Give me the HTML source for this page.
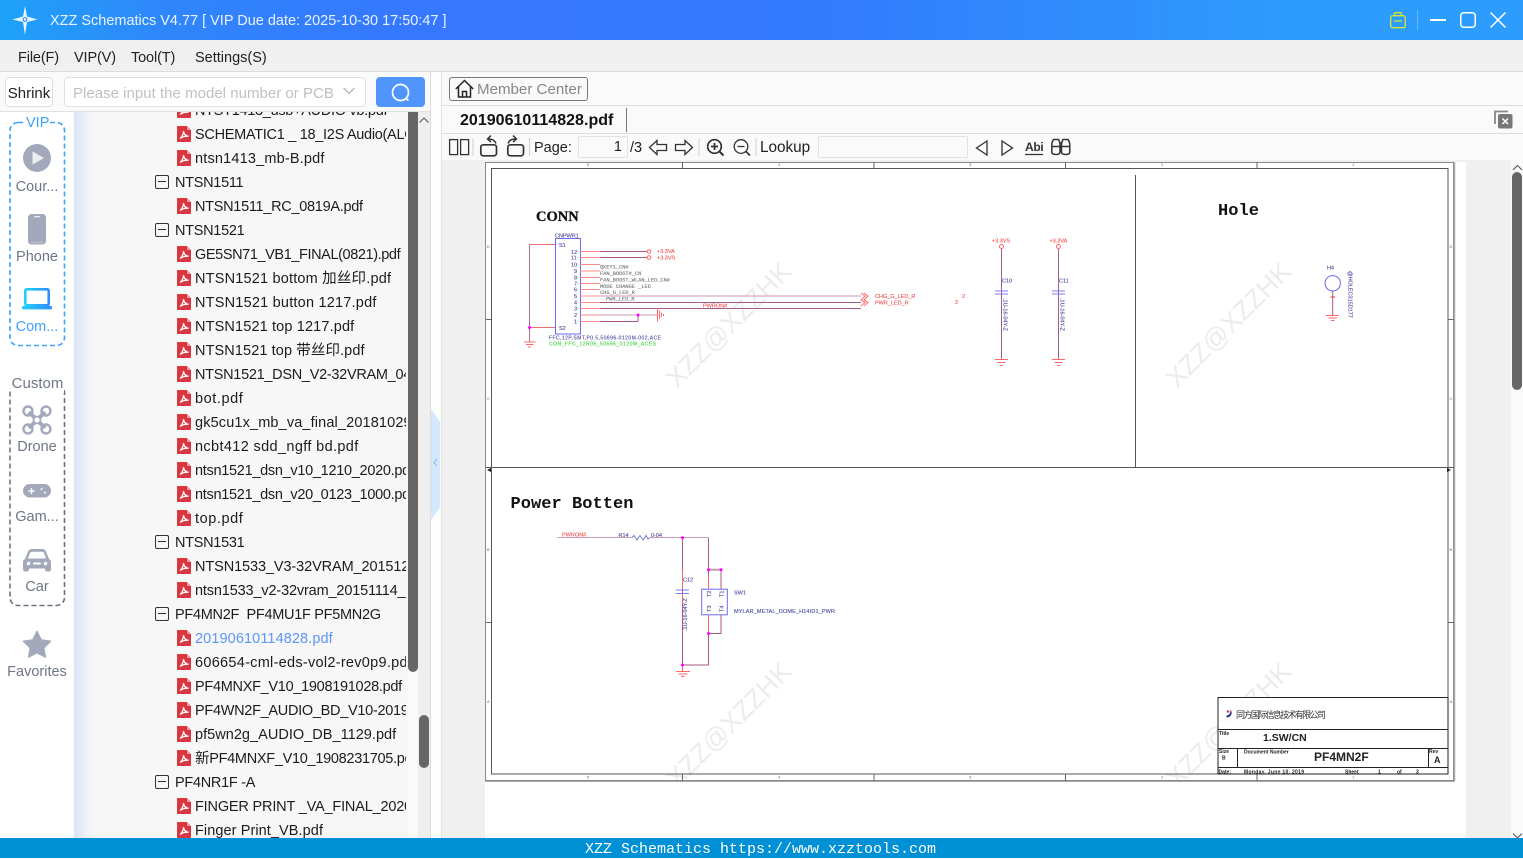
<!DOCTYPE html>
<html><head><meta charset="utf-8"><title>XZZ Schematics</title>
<style>
html,body{margin:0;padding:0}
body{width:1523px;height:858px;position:relative;overflow:hidden;background:#fafafa;font-family:"Liberation Sans","Noto Sans CJK SC",sans-serif;font-size:15px;color:#222}
.a{position:absolute;white-space:nowrap}
svg{position:absolute;overflow:visible}
#tree{position:absolute;left:74px;top:112px;width:332px;height:726px;overflow:hidden}
.r{position:absolute;left:121px;height:24px;line-height:26px;white-space:pre;color:#1c1c1c;font-size:14.5px;letter-spacing:-.29px}
.d{left:101px}
.ic{position:absolute;left:103px;width:14px;height:16px}
.bx{position:absolute;left:81px;width:12px;height:12px;border:1px solid #333;border-radius:2px}
.bx:after{content:"";position:absolute;left:2px;right:2px;top:5px;height:1px;background:#333}
.lb{position:absolute;width:74px;left:0;text-align:center;color:#6f7686;font-size:14.5px;line-height:20px}
.t{font-size:14.5px;line-height:22px;color:#222;letter-spacing:-.13px}
text{font-family:"Liberation Sans",sans-serif}
.sc text{stroke-width:.12}
</style></head><body>
<svg width="0" height="0" style="position:absolute"><defs>
<symbol id="pdf" viewBox="0 0 14 16"><path d="M1 0H10L14 4V15a1 1 0 0 1-1 1H1a1 1 0 0 1-1-1V1a1 1 0 0 1 1-1z" fill="#d9363e"/><path d="M10 0V4H14z" fill="#ee9a9d"/><path d="M3 12.5C5 11 6.800 7.500 6.500 5C6.800 8 8.500 10 11.500 10.300C8.500 10 5.500 10.800 3 12.500z" fill="none" stroke="#fff" stroke-width="1.300"/></symbol>
</defs></svg>

<!-- title bar -->
<div class="a" style="left:0;top:0;width:1523px;height:40px;background:linear-gradient(90deg,#1ea2f8 0,#2f86fb 170px,#3677ff 420px,#3379fd 800px,#2d9cfd 1300px,#2c9dfd 1523px)"></div>
<svg style="left:12px;top:6px" width="28" height="30" viewBox="0 0 28 30"><path d="M13 0L15 10.500L25.500 13.500L15 16L13 29L11 16L0.500 13.500L11 10.500z" fill="#e8f4ff"/><circle cx="13" cy="13.500" r="2.400" fill="#2b8ffb"/><circle cx="13" cy="13.500" r="1.200" fill="#fff"/></svg>
<div class="a" style="left:50px;top:11px;line-height:21px;color:#e9f3ff;font-size:14.5px;letter-spacing:-.01px">XZZ Schematics V4.77 [ VIP Due date: 2025-10-30 17:50:47 ]</div>
<svg style="left:1390px;top:12px" width="16" height="17" viewBox="0 0 16 17" fill="none" stroke="#d6e23a" stroke-width="1.300"><rect x=".7" y="3.700" width="14.600" height="12" rx="2"/><path d="M4.500 3.500V2a1.300 1.300 0 0 1 1.300-1.300h4.400A1.300 1.300 0 0 1 11.500 2V3.500M4 9h8"/></svg>
<div class="a" style="left:1417px;top:10px;width:1px;height:20px;background:#6db8f8"></div>
<div class="a" style="left:1430px;top:19px;width:16px;height:2px;background:#fff"></div>
<svg style="left:1460px;top:12px" width="16" height="16"><rect x=".75" y=".75" width="14.500" height="14.500" rx="3" fill="none" stroke="#fff" stroke-width="1.500"/></svg>
<svg style="left:1490px;top:12px" width="16" height="16"><path d="M.5 .5L15.500 15.500M15.500 .5L.5 15.500" stroke="#fff" stroke-width="1.500"/></svg>

<!-- menu -->
<div class="a" style="left:0;top:40px;width:1523px;height:31px;background:#f0f0f0;border-bottom:1px solid #dcdcdc"></div>
<div class="a t" style="left:18px;top:47px">File(F)</div>
<div class="a t" style="left:74px;top:47px">VIP(V)</div>
<div class="a t" style="left:131px;top:47px">Tool(T)</div>
<div class="a t" style="left:195px;top:47px;letter-spacing:0">Settings(S)</div>

<!-- left top toolbar -->
<div class="a" style="left:0;top:72px;width:430px;height:39px;background:#fafafa;border-bottom:1px solid #e0e0e0"></div>
<div class="a" style="left:5px;top:77px;width:46px;height:28px;border:1px solid #ddd;border-radius:4px;background:#fff;line-height:32px;text-align:center;color:#222;font-size:15px">Shrink</div>
<div class="a" style="left:64px;top:77px;width:300px;height:28px;border:1px solid #e0e0e0;border-radius:4px;background:#fff"></div>
<div class="a" style="left:73px;top:84px;line-height:20px;color:#c0c0c0;font-size:15px;letter-spacing:.02px">Please input the model number or PCB</div>
<svg style="left:343px;top:87px" width="12" height="8"><path d="M.5 .8L6 6.500L11.500 .8" fill="none" stroke="#b5b5b5" stroke-width="1.300"/></svg>
<div class="a" style="left:376px;top:77px;width:49px;height:30px;background:#4f95fb;border-radius:4px"></div>
<svg style="left:391px;top:83px" width="20" height="20" fill="none" stroke="#fff" stroke-width="1.700"><circle cx="9.500" cy="9.500" r="8"/><path d="M15 15.500L17.500 17.500"/></svg>

<!-- left rail -->
<div class="a" style="left:0;top:112px;width:74px;height:726px;background:#fff"></div>
<svg style="left:0;top:112px" width="74" height="520" fill="none" stroke-width="1.600" stroke-dasharray="5 3">
<rect x="10" y="10.500" width="54.500" height="223" rx="8" stroke="#3fa2fb"/>
<rect x="10" y="273" width="54.500" height="220.500" rx="8" stroke="#6b7282"/>
</svg>
<div class="a" style="left:26px;top:114px;width:22px;height:18px;background:#fff;line-height:18px;text-align:center;color:#3fa2fb;font-size:14.500px">VIP</div>
<div class="a" style="left:11px;top:375px;width:53px;height:18px;background:#fff;line-height:18px;text-align:center;color:#6f7686;font-size:15px">Custom</div>
<svg style="left:23px;top:144px" width="28" height="28"><circle cx="14" cy="14" r="14" fill="#a3a9bb"/><path d="M9.500 7.500L21 14L9.500 20.500z" fill="#eceef2"/></svg>
<div class="lb" style="top:177px">Cour...</div>
<svg style="left:28px;top:214px" width="18" height="31"><rect width="18" height="30.500" rx="3.500" fill="#a3a9bb"/><rect x="6" y="2" width="6" height="1.200" rx=".6" fill="#eef0f3"/><rect x="3" y="28" width="12" height=".8" fill="#c5c9d3"/></svg>
<div class="lb" style="top:247px">Phone</div>
<svg style="left:22px;top:288px" width="30" height="22"><defs><linearGradient id="g1" x1="0" x2="1" y1="0" y2="0"><stop offset="0" stop-color="#22d0f5"/><stop offset="1" stop-color="#2e8ffb"/></linearGradient></defs><rect x="3.300" y="1.300" width="23.400" height="16" rx="1.500" fill="none" stroke="url(#g1)" stroke-width="2.600"/><rect x="0" y="18" width="30" height="3.400" rx="1.200" fill="url(#g1)"/></svg>
<div class="lb" style="top:317px;color:#3fa2fb">Com...</div>
<svg style="left:22px;top:405px" width="30" height="30" fill="none" stroke="#a3a9bb"><path d="M7 7L23 23M23 7L7 23" stroke-width="4"/><circle cx="6" cy="6" r="4.500" stroke-width="2.400"/><circle cx="24" cy="6" r="4.500" stroke-width="2.400"/><circle cx="6" cy="24" r="4.500" stroke-width="2.400"/><circle cx="24" cy="24" r="4.500" stroke-width="2.400"/><circle cx="15" cy="15" r="3.500" fill="#fff" stroke-width="1.800"/></svg>
<div class="lb" style="top:437px">Drone</div>
<svg style="left:23px;top:484px" width="28" height="14"><rect width="28" height="13.500" rx="6.700" fill="#a3a9bb"/><path d="M5.500 7h6M8.500 4v6" stroke="#fff" stroke-width="1.400"/><circle cx="18.500" cy="5" r="1" fill="#fff"/><circle cx="22" cy="8.500" r="1" fill="#fff"/></svg>
<div class="lb" style="top:507px">Gam...</div>
<svg style="left:23px;top:548px" width="28" height="24"><path d="M2 11L5 3.500Q6 1 9 1H19Q22 1 23 3.500L26 11Q28 12 28 14V21Q28 23.500 26 23.500H24Q22 23.500 22 21V20.500H6V21Q6 23.500 4 23.500H2Q0 23.500 0 21V14Q0 12 2 11z" fill="#a3a9bb"/><path d="M5 10.500L7 5Q7.500 3.800 9 3.800H19Q20.500 3.800 21 5L23 10.500z" fill="#fff"/><circle cx="5.500" cy="15.500" r="1.800" fill="#fff"/><circle cx="22.500" cy="15.500" r="1.800" fill="#fff"/><rect x="10" y="14.500" width="8" height="2" rx="1" fill="#fff"/></svg>
<div class="lb" style="top:577px">Car</div>
<svg style="left:22px;top:630px" width="30" height="29"><path d="M15 1.500L19.200 10L28.500 11.300L21.700 17.800L23.300 27L15 22.600L6.700 27L8.300 17.800L1.500 11.300L10.800 10z" fill="#a3a9bb" stroke="#a3a9bb" stroke-width="1.500" stroke-linejoin="round"/></svg>
<div class="lb" style="top:662px">Favorites</div>

<!-- tree background -->
<div class="a" style="left:74px;top:112px;width:334px;height:726px;background:linear-gradient(90deg,#d9e4f5 0,#f0f3f8 14px,#f7f7f7 24px,#f7f7f7 100%)"></div>
<div id="tree">
<svg class="ic" style="top:-10px"><use href="#pdf" width="14" height="16"/></svg><div class="r" style="top:-14px">NTST1413_usb+AUDIO vb.pdf</div>
<svg class="ic" style="top:14px"><use href="#pdf" width="14" height="16"/></svg><div class="r" style="top:10px">SCHEMATIC1 _ 18_I2S Audio(ALC3234)</div>
<svg class="ic" style="top:38px"><use href="#pdf" width="14" height="16"/></svg><div class="r" style="top:34px;letter-spacing:.18px">ntsn1413_mb-B.pdf</div>
<div class="bx" style="top:63px"></div><div class="r d" style="top:58px">NTSN1511</div>
<svg class="ic" style="top:86px"><use href="#pdf" width="14" height="16"/></svg><div class="r" style="top:82px">NTSN1511_RC_0819A.pdf</div>
<div class="bx" style="top:111px"></div><div class="r d" style="top:106px">NTSN1521</div>
<svg class="ic" style="top:134px"><use href="#pdf" width="14" height="16"/></svg><div class="r" style="top:130px;letter-spacing:-.4px">GE5SN71_VB1_FINAL(0821).pdf</div>
<svg class="ic" style="top:158px"><use href="#pdf" width="14" height="16"/></svg><div class="r" style="top:154px;letter-spacing:.19px">NTSN1521 bottom 加丝印.pdf</div>
<svg class="ic" style="top:182px"><use href="#pdf" width="14" height="16"/></svg><div class="r" style="top:178px;letter-spacing:.21px">NTSN1521 button 1217.pdf</div>
<svg class="ic" style="top:206px"><use href="#pdf" width="14" height="16"/></svg><div class="r" style="top:202px;letter-spacing:.14px">NTSN1521 top 1217.pdf</div>
<svg class="ic" style="top:230px"><use href="#pdf" width="14" height="16"/></svg><div class="r" style="top:226px;letter-spacing:.1px">NTSN1521 top 带丝印.pdf</div>
<svg class="ic" style="top:254px"><use href="#pdf" width="14" height="16"/></svg><div class="r" style="top:250px">NTSN1521_DSN_V2-32VRAM_0421.pdf</div>
<svg class="ic" style="top:278px"><use href="#pdf" width="14" height="16"/></svg><div class="r" style="top:274px;letter-spacing:.57px">bot.pdf</div>
<svg class="ic" style="top:302px"><use href="#pdf" width="14" height="16"/></svg><div class="r" style="top:298px;letter-spacing:.14px">gk5cu1x_mb_va_final_20181029.pdf</div>
<svg class="ic" style="top:326px"><use href="#pdf" width="14" height="16"/></svg><div class="r" style="top:322px;letter-spacing:.36px">ncbt412 sdd_ngff bd.pdf</div>
<svg class="ic" style="top:350px"><use href="#pdf" width="14" height="16"/></svg><div class="r" style="top:346px">ntsn1521_dsn_v10_1210_2020.pdf</div>
<svg class="ic" style="top:374px"><use href="#pdf" width="14" height="16"/></svg><div class="r" style="top:370px">ntsn1521_dsn_v20_0123_1000.pdf</div>
<svg class="ic" style="top:398px"><use href="#pdf" width="14" height="16"/></svg><div class="r" style="top:394px;letter-spacing:.57px">top.pdf</div>
<div class="bx" style="top:423px"></div><div class="r d" style="top:418px">NTSN1531</div>
<svg class="ic" style="top:446px"><use href="#pdf" width="14" height="16"/></svg><div class="r" style="top:442px;letter-spacing:-.1px">NTSN1533_V3-32VRAM_20151208.pdf</div>
<svg class="ic" style="top:470px"><use href="#pdf" width="14" height="16"/></svg><div class="r" style="top:466px;letter-spacing:-.15px">ntsn1533_v2-32vram_20151114_1.pdf</div>
<div class="bx" style="top:495px"></div><div class="r d" style="top:490px">PF4MN2F  PF4MU1F PF5MN2G</div>
<svg class="ic" style="top:518px"><use href="#pdf" width="14" height="16"/></svg><div class="r" style="top:514px;color:#5b96f8;letter-spacing:.1px">20190610114828.pdf</div>
<svg class="ic" style="top:542px"><use href="#pdf" width="14" height="16"/></svg><div class="r" style="top:538px;letter-spacing:.28px">606654-cml-eds-vol2-rev0p9.pdf</div>
<svg class="ic" style="top:566px"><use href="#pdf" width="14" height="16"/></svg><div class="r" style="top:562px">PF4MNXF_V10_1908191028.pdf</div>
<svg class="ic" style="top:590px"><use href="#pdf" width="14" height="16"/></svg><div class="r" style="top:586px">PF4WN2F_AUDIO_BD_V10-20190819.pdf</div>
<svg class="ic" style="top:614px"><use href="#pdf" width="14" height="16"/></svg><div class="r" style="top:610px;letter-spacing:.03px">pf5wn2g_AUDIO_DB_1129.pdf</div>
<svg class="ic" style="top:638px"><use href="#pdf" width="14" height="16"/></svg><div class="r" style="top:634px">新PF4MNXF_V10_1908231705.pdf</div>
<div class="bx" style="top:663px"></div><div class="r d" style="top:658px">PF4NR1F -A</div>
<svg class="ic" style="top:686px"><use href="#pdf" width="14" height="16"/></svg><div class="r" style="top:682px;letter-spacing:-.18px">FINGER PRINT _VA_FINAL_20200101.pdf</div>
<svg class="ic" style="top:710px"><use href="#pdf" width="14" height="16"/></svg><div class="r" style="top:706px;letter-spacing:.08px">Finger Print_VB.pdf</div>
</div>
<div class="a" style="left:408px;top:112px;width:10px;height:560px;background:#666;border-radius:0 0 5px 5px"></div>
<div class="a" style="left:418px;top:112px;width:12px;height:726px;background:#efefef"></div>
<svg style="left:419px;top:117px" width="10" height="6"><path d="M.5 5.500L5 1L9.500 5.500" fill="none" stroke="#555"/></svg>
<div class="a" style="left:419px;top:715px;width:10px;height:53px;background:#666;border-radius:5px"></div>
<div class="a" style="left:430px;top:72px;width:1px;height:766px;background:#dcdcdc"></div>
<div class="a" style="left:431px;top:72px;width:10px;height:766px;background:#fbfefb"></div>
<div class="a" style="left:441px;top:72px;width:1px;height:766px;background:#e4e4e4"></div>
<svg style="left:431px;top:409px" width="10" height="112"><path d="M0 0L9 13V98L0 111z" fill="#d3e8fd"/><path d="M6 50L3 53.500L6 57" fill="none" stroke="#8ab8ec" stroke-width="1"/></svg>

<!-- right header -->
<div class="a" style="left:442px;top:72px;width:1081px;height:33px;background:#fafafa;border-bottom:1px solid #dedede"></div>
<div class="a" style="left:449px;top:77px;width:137px;height:22px;border:1px solid #777;border-radius:3px"></div>
<svg style="left:455px;top:79px" width="19" height="19" fill="none" stroke="#222" stroke-width="1.500"><path d="M.8 10L9.500 1.500L18.200 10M3.500 8V18H15.500V8M7.500 18V12.500H11.500V18"/></svg>
<div class="a" style="left:477px;top:80px;line-height:20px;color:#868686;font-size:15.1px">Member Center</div>
<div class="a" style="left:442px;top:106px;width:1081px;height:27px;background:#fafafa;border-bottom:1px solid #dedede"></div>
<div class="a" style="left:460px;top:111px;line-height:20px;font-weight:bold;color:#111;font-size:16px;letter-spacing:.02px">20190610114828.pdf</div>
<div class="a" style="left:626px;top:108px;width:1px;height:24px;background:#777"></div>
<svg style="left:1494px;top:110px" width="19" height="19"><path d="M1 14V1.500H14" fill="none" stroke="#888" stroke-width="1.800"/><rect x="4" y="4" width="14.500" height="14.500" rx="2" fill="#777"/><path d="M8.500 8.500L14 14M14 8.500L8.500 14" stroke="#fff" stroke-width="1.500"/></svg>

<!-- viewer toolbar -->
<div class="a" style="left:442px;top:134px;width:1081px;height:26px;background:#fafafa"></div>
<svg style="left:442px;top:134px" width="640" height="26" fill="none" stroke="#333" stroke-width="1.300">
<rect x="7.600" y="5.600" width="8" height="15"/><rect x="18.600" y="5.600" width="8" height="15"/>
<path d="M31 4v18M87.500 4v18M257 4v18M314 4v18" stroke="#d0d0d0" stroke-width="1"/>
<rect x="38.800" y="10.800" width="15.700" height="11" rx="2.500" stroke-width="1.700"/><path d="M46 5Q52 4.500 54 9.500M49 1.500L45.500 5L49 8" stroke-width="1.500"/>
<rect x="65.800" y="10.800" width="15.700" height="11" rx="2.500" stroke-width="1.700"/><path d="M74 5Q68 4.500 66 9.500M71 1.500L74.500 5L71 8" stroke-width="1.500"/>
<path d="M207.500 13.500L215 6.500V10.500H224.500V16.500H215V20.500z"/><path d="M250.500 13.500L243 6.500V10.500H233.500V16.500H243V20.500z"/>
<circle cx="272.500" cy="12.500" r="6.800" stroke-width="1.700"/><path d="M277.500 17.500L281.500 21.500" stroke-width="2"/><path d="M269 12.500h7M272.500 9v7" stroke-width="1.800"/>
<circle cx="299" cy="12.500" r="6.800" stroke-width="1.300"/><path d="M304 17.500L308 21.500" stroke-width="1.600"/><path d="M295.500 12.500h7"/>
<path d="M545 7L534.500 14L545 21z"/><path d="M560 7L570.500 14L560 21z"/>
<path d="M583 20.500H601" stroke-width="1.200"/>
<path d="M609.800 11Q609.800 8 611.500 5.500H616.500Q618 8 618 11V18Q618 20.500 614 20.500Q609.800 20.500 609.800 18zM619.500 11Q619.500 8 621 5.500H626Q627.800 8 627.800 11V18Q627.800 20.500 623.800 20.500Q619.500 20.500 619.500 18zM610 12.500H618M619.500 12.500H627.500M618 9H619.500" stroke-width="1.500"/>
</svg>
<div class="a" style="left:534px;top:138px;line-height:20px;color:#222;font-size:14.500px">Page:</div>
<div class="a" style="left:578px;top:136px;width:43px;height:20px;border:1px solid #e2e2e2;border-radius:2px;background:#fafafa;text-align:right;padding-right:5px;line-height:21px;font-size:14.500px">1</div>
<div class="a" style="left:630px;top:138px;line-height:20px;font-size:14.500px">/3</div>
<div class="a" style="left:760px;top:138px;line-height:20px;font-size:15.3px">Lookup</div>
<div class="a" style="left:818px;top:136px;width:148px;height:20px;border:1px solid #e2e2e2;border-radius:2px;background:#fafafa"></div>
<div class="a" style="left:1025px;top:140px;width:18px;line-height:14px;font-size:12px;font-weight:bold;color:#333;letter-spacing:-.3px;text-align:center">Abi</div>

<!-- viewer -->
<div class="a" style="left:442px;top:160px;width:1024px;height:678px;background:#f0f0f0"></div>
<div class="a" style="left:485px;top:162px;width:981px;height:676px;background:#fff"></div>
<div class="a" style="left:1466px;top:160px;width:45px;height:678px;background:#f0f0f0"></div>
<div class="a" style="left:1511px;top:160px;width:12px;height:678px;background:#fafafa"></div>
<svg style="left:1512px;top:164px" width="11" height="8"><path d="M1 6L5.500 1.500L10 6" fill="none" stroke="#555"/></svg>
<div class="a" style="left:1512px;top:172px;width:10px;height:218px;background:#666;border-radius:5px"></div>
<svg style="left:1512px;top:833px" width="11" height="6"><path d="M1 .5L5.500 5L10 .5" fill="none" stroke="#555"/></svg>

<svg class="sc" style="left:0;top:0" width="1523" height="858" viewBox="0 0 1523 858">
<g fill="#ececec" style="font-size:26.500px">
<text transform="translate(677,389) rotate(-45)">XZZ@XZZHK</text>
<text transform="translate(1177,389) rotate(-45)">XZZ@XZZHK</text>
<text transform="translate(677,789) rotate(-45)">XZZ@XZZHK</text>
<text transform="translate(1177,789) rotate(-45)">XZZ@XZZHK</text>
</g>
<rect x="485" y="781" width="981" height="20" fill="#fff"/>
<rect x="485.500" y="162.500" width="968" height="618" fill="none" stroke="#888" stroke-width="1"/>
<path d="M1454.500 162V781" stroke="#aaa" stroke-width="1.500"/><path d="M485 781.500H1455" stroke="#aaa"/>
<rect x="491.500" y="168.500" width="956.500" height="605.500" fill="none" stroke="#555"/>
<path d="M1135.500 175V467.500M486 467.500H1454" stroke="#555" fill="none"/>
<path d="M682.500 162V168M874 162V168M1065.500 162V168M1257 162V168M682.500 774V781M874 774V781M1065.500 774V781M1257 774V781M486 319.500H491M486 622.500H491M1448 319.500H1454M1448 622.500H1454" stroke="#666"/>
<path d="M487 470L491 468V472zM1451 470L1447 468V472z" fill="#222"/>
<g fill="#666" style="font-size:4px">
<text x="587" y="166">5</text><text x="778" y="166">4</text><text x="969" y="166">3</text><text x="1161" y="166">2</text><text x="1352" y="166">1</text>
<text x="587" y="778.500">5</text><text x="778" y="778.500">4</text><text x="969" y="778.500">3</text><text x="1161" y="778.500">2</text><text x="1352" y="778.500">1</text>
<text x="487" y="248">D</text><text x="487" y="400">C</text><text x="487" y="551">B</text><text x="487" y="703">A</text>
<text x="1449.500" y="248">D</text><text x="1449.500" y="400">C</text><text x="1449.500" y="551">B</text><text x="1449.500" y="703">A</text>
</g>
<g fill="#111">
<text x="536" y="221" style="font-family:'Liberation Serif',serif;font-size:14.500px;font-weight:bold;stroke:#111;stroke-width:.3">CONN</text>
<text x="1218" y="215" style="font-family:'Liberation Mono',monospace;font-size:17px;font-weight:bold" textLength="41">Hole</text>
<text x="510.500" y="508" style="font-family:'Liberation Mono',monospace;font-size:17px;font-weight:bold" textLength="123">Power Botten</text>
</g>

<!-- CONN -->
<g fill="none" stroke-width="1">
<rect x="555.500" y="238.500" width="25" height="95.500" stroke="#6a6af0"/>
<path d="M529.500 244.500V342" stroke="#b0708f"/><path d="M529.500 244.500H555M529.500 327.500H555" stroke="#f07070"/>
<path d="M580 251.500H600M580 257.500H600M580 264.500H600M580 271H600M580 277.500H600M580 283.500H600M580 289.500H600M580 296H600M580 302.500H600M580 308.500H600M580 315H600M580 321.500H600" stroke="#f88"/>
<path d="M600 251.500H647M600 257.500H647M600 302.500H861M600 308.500H861M600 321.500H638V315" stroke="#a85a86"/>
<path d="M600 296H861M600 315H657" stroke="#c89ab2"/>
<circle cx="649" cy="251.500" r="1.800" stroke="#f66"/><circle cx="649" cy="257.500" r="1.800" stroke="#f66"/>
<path d="M657.500 308V321.500M659.500 310.500V319M661.500 312.500V317M663.500 314V316" stroke="#f66"/>
<path d="M861 293L865 296L861 300L865 302.500L861 306M864 293L868 296L864 300L868 302.500L864 306" stroke="#f66"/>
<path d="M524 342H535.500M526 344.500H533.500M528 347H531" stroke="#f66"/>
</g>
<g fill="#f0f"><circle cx="529.500" cy="327.500" r="1.500"/><circle cx="638" cy="315" r="1.500"/></g>
<g fill="#4a4aa0" stroke="#4a4aa0" style="font-size:5.5px">
<text x="555" y="237.500">CNPWR1</text><text x="559" y="247">S1</text><text x="559" y="330">S2</text>
<text x="571" y="254">12</text><text x="571" y="259.500">11</text><text x="571" y="266.500">10</text><text x="574" y="273">9</text><text x="574" y="279.500">8</text><text x="574" y="285.500">7</text><text x="574" y="291.500">6</text><text x="574" y="298">5</text><text x="574" y="304.500">4</text><text x="574" y="310.500">3</text><text x="574" y="317">2</text><text x="574" y="323.500">1</text>
<text x="549" y="339.500" textLength="112" style="font-size:5px">FFC,12P,SMT,P0.5,50696-0120M-002,ACE</text>
</g>
<text x="549" y="345.500" textLength="107" style="font-size:5px" fill="#3fd43f" stroke="#3fd43f">CON_FFC_12R05_50696_0120M_ACES</text>
<g fill="#777" stroke="#777">
<text x="600" y="268.500" style="font-family:'Liberation Mono',monospace;font-size:5.3px">QKEY1_CN#</text><text x="600" y="275" style="font-family:'Liberation Mono',monospace;font-size:5.3px">FAN_BOOST#_CN</text><text x="600" y="281.500" style="font-family:'Liberation Mono',monospace;font-size:5.3px">FAN_BOOST_WLAN_LED_CN#</text><text x="600" y="288" style="font-family:'Liberation Mono',monospace;font-size:5.3px">MODE CHANGE _LED</text><text x="600" y="294" style="font-family:'Liberation Mono',monospace;font-size:5.3px">CHG_G_LED_R</text><text x="606" y="300.500" style="font-family:'Liberation Mono',monospace;font-size:5.3px">PWR_LED_R</text>
</g>
<g fill="#f05050" stroke="#f05050" style="font-size:5.5px">
<text x="657" y="253">+3.3VA</text><text x="657" y="259.500">+3.3VS</text>
<text x="703" y="307.500">PWRON#</text>
<text x="875" y="298">CHG_G_LED_R</text><text x="875" y="304.500">PWR_LED_R</text>
<text x="962" y="298">2</text><text x="955" y="304">2</text>
<text x="992" y="242.500">+3.3VS</text><text x="1049.500" y="242.500">+3.3VA</text>
<text x="562" y="536.500">PWRON#</text>
</g>
<!-- C10 C11 -->
<g fill="none">
<circle cx="1001.500" cy="246.500" r="2" stroke="#f66"/><circle cx="1058.500" cy="246.500" r="2" stroke="#f66"/>
<path d="M1001.500 249V359M1058.500 249V359" stroke="#a85a86"/>
<path d="M995 291H1008M995 294H1008M1052 291H1065M1052 294H1065" stroke="#7a7af0"/>
<path d="M995 359.500H1008M997.500 362.500H1005.500M1000 365.500H1003M1052 359.500H1065M1054.500 362.500H1062.500M1057 365.500H1060" stroke="#f66"/>
</g>
<g fill="#4a4aa0" stroke="#4a4aa0" style="font-size:5.5px">
<text x="1002" y="282.500">C10</text><text x="1059" y="282.500">C11</text>
<text transform="translate(1003.500,298) rotate(90)">.1U-16-04Y-Z</text><text transform="translate(1060.500,298) rotate(90)">.1U-16-04Y-Z</text>
<text x="1327" y="269.500">H4</text>
<text transform="translate(1348.500,271) rotate(90)">@HOLEC315D177</text>
</g>
<!-- Hole -->
<circle cx="1332.700" cy="283.300" r="7.700" fill="none" stroke="#6a6af0"/>
<path d="M1332.700 291V315" stroke="#a85a86" fill="none"/><path d="M1330.500 297H1335" stroke="#f33"/>
<path d="M1326 315.500H1339M1328.500 318H1337M1331 320.500H1334.500" stroke="#f66"/>
<!-- Power -->
<g fill="none">
<path d="M557.500 537.500H632M650 537.500H708" stroke="#cc9ab2"/>
<path d="M632 537.500L634 535.500L637 540L640 535.500L643 540L646 535.500L648 539L650 537.500" stroke="#7a7ad0"/>
<path d="M682.500 537.500V665M708.500 537.500V665H682.500" stroke="#a85a86"/>
<path d="M708.500 569.700H721" stroke="#c89ab2" stroke-width="2"/>
<path d="M721 569.700V589M721 615V633.500H708.500" stroke="#a85a86"/>
<path d="M708.500 575V589M708.500 615V633M682.500 570V590M682.500 594V604" stroke="#f66"/>
<path d="M676 590H689M676 593.500H689" stroke="#7a7af0"/>
<rect x="701.700" y="589.200" width="25.600" height="25.600" fill="#fff" stroke="#6a6af0"/>
<path d="M676 671.500H690M678.500 674H687.500M681 676.500H684.500" stroke="#f66"/><path d="M682.500 665V671" stroke="#f66"/>
</g>
<g fill="#f0f"><circle cx="682.500" cy="537.700" r="1.500"/><circle cx="708.500" cy="569.700" r="1.500"/><circle cx="721" cy="569.700" r="1.500"/><circle cx="708.500" cy="633.500" r="1.500"/><circle cx="682.500" cy="665" r="1.500"/></g>
<g fill="#4a4aa0" stroke="#4a4aa0" style="font-size:5.5px">
<text x="618.500" y="537">R14</text><text x="651" y="537">0-04</text><text x="683" y="581.500">C12</text>
<text transform="translate(687,631) rotate(-90)">.1U-16-04Y-Z</text>
<text transform="translate(711,597) rotate(-90)">T2</text><text transform="translate(723.500,597) rotate(-90)">T1</text>
<text transform="translate(711,612) rotate(-90)">T3</text><text transform="translate(723.500,612) rotate(-90)">T4</text>
<text x="734" y="594.500">SW1</text><text x="734" y="613" textLength="101">MYLAR_METAL_DOME_H14ID1_PWR</text>
</g>
<!-- Title block -->
<rect x="1218" y="697.500" width="230" height="76.500" fill="#fff" fill-opacity=".85" stroke="#222"/>
<path d="M1218 729.500H1448M1218 748.500H1448M1218 767.500H1448M1237.500 748.500V767.500M1428.500 748.500V767.500" stroke="#222" fill="none"/>
<path d="M1226 716Q1231 715 1230.500 709.500Q1233.500 714 1229 717Q1227 718 1226 716z" fill="#1a2f8a"/><circle cx="1228" cy="711.500" r="1.300" fill="#e33"/>
<text x="1236" y="718" style="font-family:'Liberation Sans','Noto Sans CJK SC',sans-serif;font-size:9px" textLength="90" fill="#333">同方国际信息技术有限公司</text>
<g fill="#222" style="font-size:5px;font-weight:bold">
<text x="1219" y="735">Title</text><text x="1219" y="753">Size</text><text x="1222" y="759.500">B</text><text x="1244" y="753.500">Document Number</text><text x="1429" y="753">Rev</text>
<text x="1218.500" y="773.500">Date:</text><text x="1244" y="773.500" textLength="60">Monday, June 10, 2019</text><text x="1345" y="773.500">Sheet</text><text x="1378" y="773.500">1</text><text x="1397" y="773.500">of</text><text x="1416" y="773.500">3</text>
</g>
<text x="1263" y="741" fill="#222" style="font-size:10.500px;font-weight:bold">1.SW/CN</text>
<text x="1314" y="761" fill="#222" style="font-size:12px;font-weight:bold">PF4MN2F</text>
<text x="1434" y="763" fill="#222" style="font-size:9px;font-weight:bold">A</text>
</svg>

<!-- status bar -->
<div class="a" style="left:0;top:838px;width:1523px;height:20px;background:#0090d6"></div>
<div class="a" style="left:585px;top:841px;line-height:18px;color:#fff;font-family:'Liberation Mono',monospace;font-size:15px">XZZ Schematics https://www.xzztools.com</div>
</body></html>
